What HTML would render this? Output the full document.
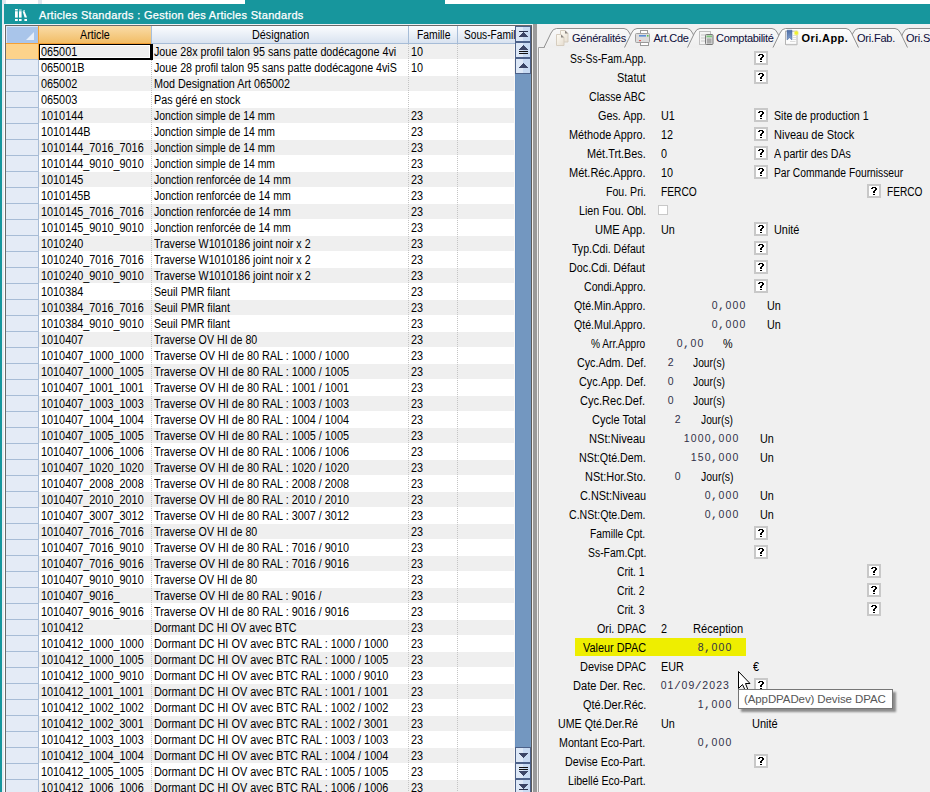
<!DOCTYPE html><html><head><meta charset="utf-8"><style>
*{margin:0;padding:0;box-sizing:border-box}
html,body{width:930px;height:792px;overflow:hidden;background:#fff;position:relative;font-family:"Liberation Sans",sans-serif;font-size:12px;color:#000}
.a{position:absolute}
.t{position:absolute;white-space:nowrap;line-height:13px}
.g{position:absolute;white-space:nowrap;line-height:13px;font-size:12px;transform-origin:0 0}
.r{position:absolute;white-space:nowrap;line-height:13px;font-size:12px;transform-origin:100% 0;text-align:right}
.m{position:absolute;white-space:nowrap;line-height:13px;font-family:"Liberation Mono",monospace;font-size:11.5px;color:#2c2c4c}
.mm{position:absolute;white-space:nowrap;line-height:13px;font-family:"Liberation Sans",sans-serif;font-size:10.5px;color:#303048}
</style></head><body><div class="a" style="left:0;top:0;width:2px;height:792px;background:#17969d"></div>
<div class="a" style="left:2px;top:0;width:2px;height:792px;background:#e6ecf2"></div>
<div class="a" style="left:2px;top:0;width:4px;height:4px;background:#dfe6ee"></div>
<div class="a" style="left:38px;top:0;width:4px;height:4px;background:#dfe6ee"></div>
<div class="a" style="left:245px;top:0;width:200px;height:4px;background:#17969d"></div>
<div class="a" style="left:4px;top:4px;width:926px;height:20px;background:#17969d"></div>
<svg class="a" style="left:0;top:0" width="40" height="26" viewBox="0 0 40 26"><g fill="#fff"><rect x="15" y="9" width="2.8" height="1.5"/><rect x="15" y="11.2" width="2.8" height="6.4"/><rect x="15" y="19" width="2.8" height="2"/><rect x="19" y="9.6" width="2.6" height="0.9"/><rect x="19" y="11.2" width="2.6" height="6.4"/><rect x="19" y="19" width="2.6" height="2"/><rect x="23.3" y="10" width="1.6" height="0.7"/><path d="M22.6,11.2 L24.6,11.2 L27,17.6 L24.6,17.6 Z"/><rect x="24.4" y="19" width="2.6" height="2"/></g></svg>
<div class="t" style="left:39px;top:8px;font-size:11px;line-height:15px;color:#fff;letter-spacing:0.31px;-webkit-text-stroke:0.25px #fff">Articles Standards : Gestion des Articles Standards</div>
<div class="a" style="left:4px;top:24px;width:926px;height:1px;background:#eef1f4"></div>
<div class="a" style="left:5px;top:25px;width:527px;height:767px;background:#fff;border-left:1px solid #696969;border-top:1px solid #696969;border-right:1px solid #5a5a5a"></div>
<div class="a" style="left:6px;top:26px;width:32px;height:17px;background:#a9c5ea;border-top:1px solid #dbe7f7;border-left:1px solid #dbe7f7"></div>
<svg class="a" style="left:23px;top:29px" width="14" height="13" viewBox="0 0 14 13"><path d="M3,11 L11,11 L11,3 Z" fill="#e6eef9"/></svg>
<div class="a" style="left:6px;top:43px;width:33px;height:1px;background:#f5a033"></div>
<div class="a" style="left:38px;top:26px;width:1px;height:17px;background:#f5a033"></div>
<div class="a" style="left:39px;top:26px;width:113px;height:18px;background:linear-gradient(#f9dca8,#f2bd66);border-bottom:1px solid #f5a033"></div>
<div class="g" style="left:80px;top:29px;transform:scaleX(0.894);">Article</div>
<div class="a" style="left:151px;top:26px;width:1px;height:18px;background:#a6bfdc"></div>
<div class="a" style="left:152px;top:26px;width:257px;height:18px;background:linear-gradient(#fbfcfe,#d9e3f0);border-bottom:1px solid #a6bcd7"></div>
<div class="g" style="left:251.6px;top:29px;transform:scaleX(0.903);">Désignation</div>
<div class="a" style="left:408px;top:26px;width:1px;height:17px;background:#a6bcd7"></div>
<div class="a" style="left:409px;top:26px;width:49px;height:18px;background:linear-gradient(#fbfcfe,#d9e3f0);border-bottom:1px solid #a6bcd7"></div>
<div class="g" style="left:416.6px;top:29px;transform:scaleX(0.865);">Famille</div>
<div class="a" style="left:457px;top:26px;width:1px;height:17px;background:#a6bcd7"></div>
<div class="a" style="left:458px;top:26px;width:57px;height:18px;background:linear-gradient(#fbfcfe,#d9e3f0);border-bottom:1px solid #a6bcd7"></div>
<div class="g" style="left:463.6px;top:29px;transform:scaleX(0.847);">Sous-Famil</div>
<div class="a" style="left:6px;top:44px;width:32px;height:16px;background:#fdd38b;border-bottom:1px solid #a7bcd6"></div>
<div class="a" style="left:39px;top:44px;width:476px;height:15px;background:#efefef"></div>
<div class="g" style="left:153.6px;top:46px;transform:scaleX(0.894);">Joue 28x profil talon 95 sans patte dodécagone 4vi</div>
<div class="g" style="left:410.8px;top:46px;transform:scaleX(0.9);">10</div>
<div class="a" style="left:6px;top:60px;width:32px;height:16px;background:#e4ebf6;border-bottom:1px solid #a7bcd6"></div>
<div class="a" style="left:39px;top:60px;width:476px;height:15px;background:#ffffff"></div>
<div class="g" style="left:40.8px;top:62px;transform:scaleX(0.905);">065001B</div>
<div class="g" style="left:153.6px;top:62px;transform:scaleX(0.89);">Joue 28 profil talon 95 sans patte dodécagone 4viS</div>
<div class="g" style="left:410.8px;top:62px;transform:scaleX(0.9);">10</div>
<div class="a" style="left:6px;top:76px;width:32px;height:16px;background:#e4ebf6;border-bottom:1px solid #a7bcd6"></div>
<div class="a" style="left:39px;top:76px;width:476px;height:15px;background:#efefef"></div>
<div class="g" style="left:40.8px;top:78px;transform:scaleX(0.905);">065002</div>
<div class="g" style="left:153.6px;top:78px;transform:scaleX(0.898);">Mod Designation Art 065002</div>
<div class="a" style="left:6px;top:92px;width:32px;height:16px;background:#e4ebf6;border-bottom:1px solid #a7bcd6"></div>
<div class="a" style="left:39px;top:92px;width:476px;height:15px;background:#ffffff"></div>
<div class="g" style="left:40.8px;top:94px;transform:scaleX(0.905);">065003</div>
<div class="g" style="left:153.6px;top:94px;transform:scaleX(0.899);">Pas géré en stock</div>
<div class="a" style="left:6px;top:108px;width:32px;height:16px;background:#e4ebf6;border-bottom:1px solid #a7bcd6"></div>
<div class="a" style="left:39px;top:108px;width:476px;height:15px;background:#efefef"></div>
<div class="g" style="left:40.8px;top:110px;transform:scaleX(0.905);">1010144</div>
<div class="g" style="left:153.6px;top:110px;transform:scaleX(0.868);">Jonction simple de 14 mm</div>
<div class="g" style="left:410.8px;top:110px;transform:scaleX(0.9);">23</div>
<div class="a" style="left:6px;top:124px;width:32px;height:16px;background:#e4ebf6;border-bottom:1px solid #a7bcd6"></div>
<div class="a" style="left:39px;top:124px;width:476px;height:15px;background:#ffffff"></div>
<div class="g" style="left:40.8px;top:126px;transform:scaleX(0.905);">1010144B</div>
<div class="g" style="left:153.6px;top:126px;transform:scaleX(0.868);">Jonction simple de 14 mm</div>
<div class="g" style="left:410.8px;top:126px;transform:scaleX(0.9);">23</div>
<div class="a" style="left:6px;top:140px;width:32px;height:16px;background:#e4ebf6;border-bottom:1px solid #a7bcd6"></div>
<div class="a" style="left:39px;top:140px;width:476px;height:15px;background:#efefef"></div>
<div class="g" style="left:40.8px;top:142px;transform:scaleX(0.905);">1010144_7016_7016</div>
<div class="g" style="left:153.6px;top:142px;transform:scaleX(0.868);">Jonction simple de 14 mm</div>
<div class="g" style="left:410.8px;top:142px;transform:scaleX(0.9);">23</div>
<div class="a" style="left:6px;top:156px;width:32px;height:16px;background:#e4ebf6;border-bottom:1px solid #a7bcd6"></div>
<div class="a" style="left:39px;top:156px;width:476px;height:15px;background:#ffffff"></div>
<div class="g" style="left:40.8px;top:158px;transform:scaleX(0.905);">1010144_9010_9010</div>
<div class="g" style="left:153.6px;top:158px;transform:scaleX(0.868);">Jonction simple de 14 mm</div>
<div class="g" style="left:410.8px;top:158px;transform:scaleX(0.9);">23</div>
<div class="a" style="left:6px;top:172px;width:32px;height:16px;background:#e4ebf6;border-bottom:1px solid #a7bcd6"></div>
<div class="a" style="left:39px;top:172px;width:476px;height:15px;background:#efefef"></div>
<div class="g" style="left:40.8px;top:174px;transform:scaleX(0.905);">1010145</div>
<div class="g" style="left:153.6px;top:174px;transform:scaleX(0.88);">Jonction renforcée de 14 mm</div>
<div class="g" style="left:410.8px;top:174px;transform:scaleX(0.9);">23</div>
<div class="a" style="left:6px;top:188px;width:32px;height:16px;background:#e4ebf6;border-bottom:1px solid #a7bcd6"></div>
<div class="a" style="left:39px;top:188px;width:476px;height:15px;background:#ffffff"></div>
<div class="g" style="left:40.8px;top:190px;transform:scaleX(0.905);">1010145B</div>
<div class="g" style="left:153.6px;top:190px;transform:scaleX(0.88);">Jonction renforcée de 14 mm</div>
<div class="g" style="left:410.8px;top:190px;transform:scaleX(0.9);">23</div>
<div class="a" style="left:6px;top:204px;width:32px;height:16px;background:#e4ebf6;border-bottom:1px solid #a7bcd6"></div>
<div class="a" style="left:39px;top:204px;width:476px;height:15px;background:#efefef"></div>
<div class="g" style="left:40.8px;top:206px;transform:scaleX(0.905);">1010145_7016_7016</div>
<div class="g" style="left:153.6px;top:206px;transform:scaleX(0.88);">Jonction renforcée de 14 mm</div>
<div class="g" style="left:410.8px;top:206px;transform:scaleX(0.9);">23</div>
<div class="a" style="left:6px;top:220px;width:32px;height:16px;background:#e4ebf6;border-bottom:1px solid #a7bcd6"></div>
<div class="a" style="left:39px;top:220px;width:476px;height:15px;background:#ffffff"></div>
<div class="g" style="left:40.8px;top:222px;transform:scaleX(0.905);">1010145_9010_9010</div>
<div class="g" style="left:153.6px;top:222px;transform:scaleX(0.88);">Jonction renforcée de 14 mm</div>
<div class="g" style="left:410.8px;top:222px;transform:scaleX(0.9);">23</div>
<div class="a" style="left:6px;top:236px;width:32px;height:16px;background:#e4ebf6;border-bottom:1px solid #a7bcd6"></div>
<div class="a" style="left:39px;top:236px;width:476px;height:15px;background:#efefef"></div>
<div class="g" style="left:40.8px;top:238px;transform:scaleX(0.905);">1010240</div>
<div class="g" style="left:153.6px;top:238px;transform:scaleX(0.888);">Traverse W1010186 joint noir x 2</div>
<div class="g" style="left:410.8px;top:238px;transform:scaleX(0.9);">23</div>
<div class="a" style="left:6px;top:252px;width:32px;height:16px;background:#e4ebf6;border-bottom:1px solid #a7bcd6"></div>
<div class="a" style="left:39px;top:252px;width:476px;height:15px;background:#ffffff"></div>
<div class="g" style="left:40.8px;top:254px;transform:scaleX(0.905);">1010240_7016_7016</div>
<div class="g" style="left:153.6px;top:254px;transform:scaleX(0.888);">Traverse W1010186 joint noir x 2</div>
<div class="g" style="left:410.8px;top:254px;transform:scaleX(0.9);">23</div>
<div class="a" style="left:6px;top:268px;width:32px;height:16px;background:#e4ebf6;border-bottom:1px solid #a7bcd6"></div>
<div class="a" style="left:39px;top:268px;width:476px;height:15px;background:#efefef"></div>
<div class="g" style="left:40.8px;top:270px;transform:scaleX(0.905);">1010240_9010_9010</div>
<div class="g" style="left:153.6px;top:270px;transform:scaleX(0.888);">Traverse W1010186 joint noir x 2</div>
<div class="g" style="left:410.8px;top:270px;transform:scaleX(0.9);">23</div>
<div class="a" style="left:6px;top:284px;width:32px;height:16px;background:#e4ebf6;border-bottom:1px solid #a7bcd6"></div>
<div class="a" style="left:39px;top:284px;width:476px;height:15px;background:#ffffff"></div>
<div class="g" style="left:40.8px;top:286px;transform:scaleX(0.905);">1010384</div>
<div class="g" style="left:153.6px;top:286px;transform:scaleX(0.889);">Seuil PMR filant</div>
<div class="g" style="left:410.8px;top:286px;transform:scaleX(0.9);">23</div>
<div class="a" style="left:6px;top:300px;width:32px;height:16px;background:#e4ebf6;border-bottom:1px solid #a7bcd6"></div>
<div class="a" style="left:39px;top:300px;width:476px;height:15px;background:#efefef"></div>
<div class="g" style="left:40.8px;top:302px;transform:scaleX(0.905);">1010384_7016_7016</div>
<div class="g" style="left:153.6px;top:302px;transform:scaleX(0.889);">Seuil PMR filant</div>
<div class="g" style="left:410.8px;top:302px;transform:scaleX(0.9);">23</div>
<div class="a" style="left:6px;top:316px;width:32px;height:16px;background:#e4ebf6;border-bottom:1px solid #a7bcd6"></div>
<div class="a" style="left:39px;top:316px;width:476px;height:15px;background:#ffffff"></div>
<div class="g" style="left:40.8px;top:318px;transform:scaleX(0.905);">1010384_9010_9010</div>
<div class="g" style="left:153.6px;top:318px;transform:scaleX(0.889);">Seuil PMR filant</div>
<div class="g" style="left:410.8px;top:318px;transform:scaleX(0.9);">23</div>
<div class="a" style="left:6px;top:332px;width:32px;height:16px;background:#e4ebf6;border-bottom:1px solid #a7bcd6"></div>
<div class="a" style="left:39px;top:332px;width:476px;height:15px;background:#efefef"></div>
<div class="g" style="left:40.8px;top:334px;transform:scaleX(0.905);">1010407</div>
<div class="g" style="left:153.6px;top:334px;transform:scaleX(0.888);">Traverse OV HI de 80</div>
<div class="g" style="left:410.8px;top:334px;transform:scaleX(0.9);">23</div>
<div class="a" style="left:6px;top:348px;width:32px;height:16px;background:#e4ebf6;border-bottom:1px solid #a7bcd6"></div>
<div class="a" style="left:39px;top:348px;width:476px;height:15px;background:#ffffff"></div>
<div class="g" style="left:40.8px;top:350px;transform:scaleX(0.905);">1010407_1000_1000</div>
<div class="g" style="left:153.6px;top:350px;transform:scaleX(0.903);">Traverse OV HI de 80 RAL : 1000 / 1000</div>
<div class="g" style="left:410.8px;top:350px;transform:scaleX(0.9);">23</div>
<div class="a" style="left:6px;top:364px;width:32px;height:16px;background:#e4ebf6;border-bottom:1px solid #a7bcd6"></div>
<div class="a" style="left:39px;top:364px;width:476px;height:15px;background:#efefef"></div>
<div class="g" style="left:40.8px;top:366px;transform:scaleX(0.905);">1010407_1000_1005</div>
<div class="g" style="left:153.6px;top:366px;transform:scaleX(0.903);">Traverse OV HI de 80 RAL : 1000 / 1005</div>
<div class="g" style="left:410.8px;top:366px;transform:scaleX(0.9);">23</div>
<div class="a" style="left:6px;top:380px;width:32px;height:16px;background:#e4ebf6;border-bottom:1px solid #a7bcd6"></div>
<div class="a" style="left:39px;top:380px;width:476px;height:15px;background:#ffffff"></div>
<div class="g" style="left:40.8px;top:382px;transform:scaleX(0.905);">1010407_1001_1001</div>
<div class="g" style="left:153.6px;top:382px;transform:scaleX(0.903);">Traverse OV HI de 80 RAL : 1001 / 1001</div>
<div class="g" style="left:410.8px;top:382px;transform:scaleX(0.9);">23</div>
<div class="a" style="left:6px;top:396px;width:32px;height:16px;background:#e4ebf6;border-bottom:1px solid #a7bcd6"></div>
<div class="a" style="left:39px;top:396px;width:476px;height:15px;background:#efefef"></div>
<div class="g" style="left:40.8px;top:398px;transform:scaleX(0.905);">1010407_1003_1003</div>
<div class="g" style="left:153.6px;top:398px;transform:scaleX(0.903);">Traverse OV HI de 80 RAL : 1003 / 1003</div>
<div class="g" style="left:410.8px;top:398px;transform:scaleX(0.9);">23</div>
<div class="a" style="left:6px;top:412px;width:32px;height:16px;background:#e4ebf6;border-bottom:1px solid #a7bcd6"></div>
<div class="a" style="left:39px;top:412px;width:476px;height:15px;background:#ffffff"></div>
<div class="g" style="left:40.8px;top:414px;transform:scaleX(0.905);">1010407_1004_1004</div>
<div class="g" style="left:153.6px;top:414px;transform:scaleX(0.903);">Traverse OV HI de 80 RAL : 1004 / 1004</div>
<div class="g" style="left:410.8px;top:414px;transform:scaleX(0.9);">23</div>
<div class="a" style="left:6px;top:428px;width:32px;height:16px;background:#e4ebf6;border-bottom:1px solid #a7bcd6"></div>
<div class="a" style="left:39px;top:428px;width:476px;height:15px;background:#efefef"></div>
<div class="g" style="left:40.8px;top:430px;transform:scaleX(0.905);">1010407_1005_1005</div>
<div class="g" style="left:153.6px;top:430px;transform:scaleX(0.903);">Traverse OV HI de 80 RAL : 1005 / 1005</div>
<div class="g" style="left:410.8px;top:430px;transform:scaleX(0.9);">23</div>
<div class="a" style="left:6px;top:444px;width:32px;height:16px;background:#e4ebf6;border-bottom:1px solid #a7bcd6"></div>
<div class="a" style="left:39px;top:444px;width:476px;height:15px;background:#ffffff"></div>
<div class="g" style="left:40.8px;top:446px;transform:scaleX(0.905);">1010407_1006_1006</div>
<div class="g" style="left:153.6px;top:446px;transform:scaleX(0.903);">Traverse OV HI de 80 RAL : 1006 / 1006</div>
<div class="g" style="left:410.8px;top:446px;transform:scaleX(0.9);">23</div>
<div class="a" style="left:6px;top:460px;width:32px;height:16px;background:#e4ebf6;border-bottom:1px solid #a7bcd6"></div>
<div class="a" style="left:39px;top:460px;width:476px;height:15px;background:#efefef"></div>
<div class="g" style="left:40.8px;top:462px;transform:scaleX(0.905);">1010407_1020_1020</div>
<div class="g" style="left:153.6px;top:462px;transform:scaleX(0.903);">Traverse OV HI de 80 RAL : 1020 / 1020</div>
<div class="g" style="left:410.8px;top:462px;transform:scaleX(0.9);">23</div>
<div class="a" style="left:6px;top:476px;width:32px;height:16px;background:#e4ebf6;border-bottom:1px solid #a7bcd6"></div>
<div class="a" style="left:39px;top:476px;width:476px;height:15px;background:#ffffff"></div>
<div class="g" style="left:40.8px;top:478px;transform:scaleX(0.905);">1010407_2008_2008</div>
<div class="g" style="left:153.6px;top:478px;transform:scaleX(0.903);">Traverse OV HI de 80 RAL : 2008 / 2008</div>
<div class="g" style="left:410.8px;top:478px;transform:scaleX(0.9);">23</div>
<div class="a" style="left:6px;top:492px;width:32px;height:16px;background:#e4ebf6;border-bottom:1px solid #a7bcd6"></div>
<div class="a" style="left:39px;top:492px;width:476px;height:15px;background:#efefef"></div>
<div class="g" style="left:40.8px;top:494px;transform:scaleX(0.905);">1010407_2010_2010</div>
<div class="g" style="left:153.6px;top:494px;transform:scaleX(0.903);">Traverse OV HI de 80 RAL : 2010 / 2010</div>
<div class="g" style="left:410.8px;top:494px;transform:scaleX(0.9);">23</div>
<div class="a" style="left:6px;top:508px;width:32px;height:16px;background:#e4ebf6;border-bottom:1px solid #a7bcd6"></div>
<div class="a" style="left:39px;top:508px;width:476px;height:15px;background:#ffffff"></div>
<div class="g" style="left:40.8px;top:510px;transform:scaleX(0.905);">1010407_3007_3012</div>
<div class="g" style="left:153.6px;top:510px;transform:scaleX(0.903);">Traverse OV HI de 80 RAL : 3007 / 3012</div>
<div class="g" style="left:410.8px;top:510px;transform:scaleX(0.9);">23</div>
<div class="a" style="left:6px;top:524px;width:32px;height:16px;background:#e4ebf6;border-bottom:1px solid #a7bcd6"></div>
<div class="a" style="left:39px;top:524px;width:476px;height:15px;background:#efefef"></div>
<div class="g" style="left:40.8px;top:526px;transform:scaleX(0.905);">1010407_7016_7016</div>
<div class="g" style="left:153.6px;top:526px;transform:scaleX(0.888);">Traverse OV HI de 80</div>
<div class="g" style="left:410.8px;top:526px;transform:scaleX(0.9);">23</div>
<div class="a" style="left:6px;top:540px;width:32px;height:16px;background:#e4ebf6;border-bottom:1px solid #a7bcd6"></div>
<div class="a" style="left:39px;top:540px;width:476px;height:15px;background:#ffffff"></div>
<div class="g" style="left:40.8px;top:542px;transform:scaleX(0.905);">1010407_7016_9010</div>
<div class="g" style="left:153.6px;top:542px;transform:scaleX(0.903);">Traverse OV HI de 80 RAL : 7016 / 9010</div>
<div class="g" style="left:410.8px;top:542px;transform:scaleX(0.9);">23</div>
<div class="a" style="left:6px;top:556px;width:32px;height:16px;background:#e4ebf6;border-bottom:1px solid #a7bcd6"></div>
<div class="a" style="left:39px;top:556px;width:476px;height:15px;background:#efefef"></div>
<div class="g" style="left:40.8px;top:558px;transform:scaleX(0.905);">1010407_7016_9016</div>
<div class="g" style="left:153.6px;top:558px;transform:scaleX(0.903);">Traverse OV HI de 80 RAL : 7016 / 9016</div>
<div class="g" style="left:410.8px;top:558px;transform:scaleX(0.9);">23</div>
<div class="a" style="left:6px;top:572px;width:32px;height:16px;background:#e4ebf6;border-bottom:1px solid #a7bcd6"></div>
<div class="a" style="left:39px;top:572px;width:476px;height:15px;background:#ffffff"></div>
<div class="g" style="left:40.8px;top:574px;transform:scaleX(0.905);">1010407_9010_9010</div>
<div class="g" style="left:153.6px;top:574px;transform:scaleX(0.888);">Traverse OV HI de 80</div>
<div class="g" style="left:410.8px;top:574px;transform:scaleX(0.9);">23</div>
<div class="a" style="left:6px;top:588px;width:32px;height:16px;background:#e4ebf6;border-bottom:1px solid #a7bcd6"></div>
<div class="a" style="left:39px;top:588px;width:476px;height:15px;background:#efefef"></div>
<div class="g" style="left:40.8px;top:590px;transform:scaleX(0.905);">1010407_9016_</div>
<div class="g" style="left:153.6px;top:590px;transform:scaleX(0.901);">Traverse OV HI de 80 RAL : 9016 /</div>
<div class="g" style="left:410.8px;top:590px;transform:scaleX(0.9);">23</div>
<div class="a" style="left:6px;top:604px;width:32px;height:16px;background:#e4ebf6;border-bottom:1px solid #a7bcd6"></div>
<div class="a" style="left:39px;top:604px;width:476px;height:15px;background:#ffffff"></div>
<div class="g" style="left:40.8px;top:606px;transform:scaleX(0.905);">1010407_9016_9016</div>
<div class="g" style="left:153.6px;top:606px;transform:scaleX(0.903);">Traverse OV HI de 80 RAL : 9016 / 9016</div>
<div class="g" style="left:410.8px;top:606px;transform:scaleX(0.9);">23</div>
<div class="a" style="left:6px;top:620px;width:32px;height:16px;background:#e4ebf6;border-bottom:1px solid #a7bcd6"></div>
<div class="a" style="left:39px;top:620px;width:476px;height:15px;background:#efefef"></div>
<div class="g" style="left:40.8px;top:622px;transform:scaleX(0.905);">1010412</div>
<div class="g" style="left:153.6px;top:622px;transform:scaleX(0.898);">Dormant DC HI OV avec BTC</div>
<div class="g" style="left:410.8px;top:622px;transform:scaleX(0.9);">23</div>
<div class="a" style="left:6px;top:636px;width:32px;height:16px;background:#e4ebf6;border-bottom:1px solid #a7bcd6"></div>
<div class="a" style="left:39px;top:636px;width:476px;height:15px;background:#ffffff"></div>
<div class="g" style="left:40.8px;top:638px;transform:scaleX(0.905);">1010412_1000_1000</div>
<div class="g" style="left:153.6px;top:638px;transform:scaleX(0.907);">Dormant DC HI OV avec BTC RAL : 1000 / 1000</div>
<div class="g" style="left:410.8px;top:638px;transform:scaleX(0.9);">23</div>
<div class="a" style="left:6px;top:652px;width:32px;height:16px;background:#e4ebf6;border-bottom:1px solid #a7bcd6"></div>
<div class="a" style="left:39px;top:652px;width:476px;height:15px;background:#efefef"></div>
<div class="g" style="left:40.8px;top:654px;transform:scaleX(0.905);">1010412_1000_1005</div>
<div class="g" style="left:153.6px;top:654px;transform:scaleX(0.907);">Dormant DC HI OV avec BTC RAL : 1000 / 1005</div>
<div class="g" style="left:410.8px;top:654px;transform:scaleX(0.9);">23</div>
<div class="a" style="left:6px;top:668px;width:32px;height:16px;background:#e4ebf6;border-bottom:1px solid #a7bcd6"></div>
<div class="a" style="left:39px;top:668px;width:476px;height:15px;background:#ffffff"></div>
<div class="g" style="left:40.8px;top:670px;transform:scaleX(0.905);">1010412_1000_9010</div>
<div class="g" style="left:153.6px;top:670px;transform:scaleX(0.907);">Dormant DC HI OV avec BTC RAL : 1000 / 9010</div>
<div class="g" style="left:410.8px;top:670px;transform:scaleX(0.9);">23</div>
<div class="a" style="left:6px;top:684px;width:32px;height:16px;background:#e4ebf6;border-bottom:1px solid #a7bcd6"></div>
<div class="a" style="left:39px;top:684px;width:476px;height:15px;background:#efefef"></div>
<div class="g" style="left:40.8px;top:686px;transform:scaleX(0.905);">1010412_1001_1001</div>
<div class="g" style="left:153.6px;top:686px;transform:scaleX(0.907);">Dormant DC HI OV avec BTC RAL : 1001 / 1001</div>
<div class="g" style="left:410.8px;top:686px;transform:scaleX(0.9);">23</div>
<div class="a" style="left:6px;top:700px;width:32px;height:16px;background:#e4ebf6;border-bottom:1px solid #a7bcd6"></div>
<div class="a" style="left:39px;top:700px;width:476px;height:15px;background:#ffffff"></div>
<div class="g" style="left:40.8px;top:702px;transform:scaleX(0.905);">1010412_1002_1002</div>
<div class="g" style="left:153.6px;top:702px;transform:scaleX(0.907);">Dormant DC HI OV avec BTC RAL : 1002 / 1002</div>
<div class="g" style="left:410.8px;top:702px;transform:scaleX(0.9);">23</div>
<div class="a" style="left:6px;top:716px;width:32px;height:16px;background:#e4ebf6;border-bottom:1px solid #a7bcd6"></div>
<div class="a" style="left:39px;top:716px;width:476px;height:15px;background:#efefef"></div>
<div class="g" style="left:40.8px;top:718px;transform:scaleX(0.905);">1010412_1002_3001</div>
<div class="g" style="left:153.6px;top:718px;transform:scaleX(0.907);">Dormant DC HI OV avec BTC RAL : 1002 / 3001</div>
<div class="g" style="left:410.8px;top:718px;transform:scaleX(0.9);">23</div>
<div class="a" style="left:6px;top:732px;width:32px;height:16px;background:#e4ebf6;border-bottom:1px solid #a7bcd6"></div>
<div class="a" style="left:39px;top:732px;width:476px;height:15px;background:#ffffff"></div>
<div class="g" style="left:40.8px;top:734px;transform:scaleX(0.905);">1010412_1003_1003</div>
<div class="g" style="left:153.6px;top:734px;transform:scaleX(0.907);">Dormant DC HI OV avec BTC RAL : 1003 / 1003</div>
<div class="g" style="left:410.8px;top:734px;transform:scaleX(0.9);">23</div>
<div class="a" style="left:6px;top:748px;width:32px;height:16px;background:#e4ebf6;border-bottom:1px solid #a7bcd6"></div>
<div class="a" style="left:39px;top:748px;width:476px;height:15px;background:#efefef"></div>
<div class="g" style="left:40.8px;top:750px;transform:scaleX(0.905);">1010412_1004_1004</div>
<div class="g" style="left:153.6px;top:750px;transform:scaleX(0.907);">Dormant DC HI OV avec BTC RAL : 1004 / 1004</div>
<div class="g" style="left:410.8px;top:750px;transform:scaleX(0.9);">23</div>
<div class="a" style="left:6px;top:764px;width:32px;height:16px;background:#e4ebf6;border-bottom:1px solid #a7bcd6"></div>
<div class="a" style="left:39px;top:764px;width:476px;height:15px;background:#ffffff"></div>
<div class="g" style="left:40.8px;top:766px;transform:scaleX(0.905);">1010412_1005_1005</div>
<div class="g" style="left:153.6px;top:766px;transform:scaleX(0.907);">Dormant DC HI OV avec BTC RAL : 1005 / 1005</div>
<div class="g" style="left:410.8px;top:766px;transform:scaleX(0.9);">23</div>
<div class="a" style="left:6px;top:780px;width:32px;height:16px;background:#e4ebf6;border-bottom:1px solid #a7bcd6"></div>
<div class="a" style="left:39px;top:780px;width:476px;height:15px;background:#efefef"></div>
<div class="g" style="left:40.8px;top:782px;transform:scaleX(0.905);">1010412_1006_1006</div>
<div class="g" style="left:153.6px;top:782px;transform:scaleX(0.907);">Dormant DC HI OV avec BTC RAL : 1006 / 1006</div>
<div class="g" style="left:410.8px;top:782px;transform:scaleX(0.9);">23</div>
<div class="a" style="left:38px;top:60px;width:1px;height:732px;background:#a7bcd6"></div>
<div class="a" style="left:38px;top:44px;width:1px;height:16px;background:#f5a033"></div>
<div class="a" style="left:151px;top:44px;width:1px;height:748px;background:repeating-linear-gradient(#c4c4c4 0 1px,transparent 1px 2px)"></div>
<div class="a" style="left:408px;top:44px;width:1px;height:748px;background:repeating-linear-gradient(#c4c4c4 0 1px,transparent 1px 2px)"></div>
<div class="a" style="left:457px;top:44px;width:1px;height:748px;background:repeating-linear-gradient(#c4c4c4 0 1px,transparent 1px 2px)"></div>
<div class="a" style="left:39px;top:44px;width:114px;height:16px;border:1px solid #000;border-right:3px solid #000;border-bottom:2px solid #000;"></div>
<div class="a" style="left:40px;top:45px;width:110px;height:13px;border:1px solid #fff;background:#efefef"></div>
<div class="g" style="left:40.8px;top:46px;transform:scaleX(0.905);">065001</div>
<svg class="a" style="left:515px;top:26px" width="16" height="766" viewBox="515 26 16 766" shape-rendering="crispEdges"><rect x="515" y="26" width="16" height="766" fill="#7397c0"/><rect x="515" y="26" width="1" height="766" fill="#6a90bf"/><rect x="515" y="26" width="16" height="16" fill="#4c6189"/><rect x="516" y="27" width="7" height="14" fill="#dde8f7"/><rect x="523" y="27" width="7" height="14" fill="#c7daf2"/><rect x="515" y="42" width="16" height="16" fill="#4c6189"/><rect x="516" y="43" width="7" height="14" fill="#dde8f7"/><rect x="523" y="43" width="7" height="14" fill="#c7daf2"/><rect x="515" y="58" width="16" height="16" fill="#4c6189"/><rect x="516" y="59" width="7" height="14" fill="#dde8f7"/><rect x="523" y="59" width="7" height="14" fill="#c7daf2"/><rect x="515" y="73" width="16" height="1" fill="#4c6189"/><rect x="519" y="31" width="9" height="1" fill="#2c3550"/><rect x="523" y="32" width="1" height="1" fill="#3b4566"/><rect x="522" y="33" width="3" height="1" fill="#3b4566"/><rect x="521" y="34" width="5" height="1" fill="#3b4566"/><rect x="520" y="35" width="7" height="1" fill="#3b4566"/><rect x="519" y="36" width="9" height="1" fill="#3b4566"/><rect x="523" y="45" width="1" height="1" fill="#3b4566"/><rect x="522" y="46" width="3" height="1" fill="#3b4566"/><rect x="521" y="47" width="5" height="1" fill="#3b4566"/><rect x="520" y="48" width="7" height="1" fill="#3b4566"/><rect x="519" y="49" width="9" height="1" fill="#3b4566"/><rect x="519" y="51" width="9" height="1" fill="#111"/><rect x="519" y="53" width="9" height="1" fill="#111"/><rect x="523" y="63" width="1" height="1" fill="#3b4566"/><rect x="522" y="64" width="3" height="1" fill="#3b4566"/><rect x="521" y="65" width="5" height="1" fill="#3b4566"/><rect x="520" y="66" width="7" height="1" fill="#3b4566"/><rect x="519" y="67" width="9" height="1" fill="#3b4566"/><rect x="515" y="747" width="16" height="16" fill="#4c6189"/><rect x="516" y="748" width="7" height="14" fill="#dde8f7"/><rect x="523" y="748" width="7" height="14" fill="#c7daf2"/><rect x="515" y="763" width="16" height="16" fill="#4c6189"/><rect x="516" y="764" width="7" height="14" fill="#dde8f7"/><rect x="523" y="764" width="7" height="14" fill="#c7daf2"/><rect x="515" y="779" width="16" height="16" fill="#4c6189"/><rect x="516" y="780" width="7" height="14" fill="#dde8f7"/><rect x="523" y="780" width="7" height="14" fill="#c7daf2"/><rect x="515" y="747" width="16" height="1" fill="#4c6189"/><rect x="519" y="753" width="9" height="1" fill="#3b4566"/><rect x="520" y="754" width="7" height="1" fill="#3b4566"/><rect x="521" y="755" width="5" height="1" fill="#3b4566"/><rect x="522" y="756" width="3" height="1" fill="#3b4566"/><rect x="523" y="757" width="1" height="1" fill="#3b4566"/><rect x="519" y="767" width="9" height="1" fill="#111"/><rect x="519" y="769" width="9" height="1" fill="#111"/><rect x="519" y="771" width="9" height="1" fill="#3b4566"/><rect x="520" y="772" width="7" height="1" fill="#3b4566"/><rect x="521" y="773" width="5" height="1" fill="#3b4566"/><rect x="522" y="774" width="3" height="1" fill="#3b4566"/><rect x="523" y="775" width="1" height="1" fill="#3b4566"/><rect x="519" y="784" width="9" height="1" fill="#3b4566"/><rect x="520" y="785" width="7" height="1" fill="#3b4566"/><rect x="521" y="786" width="5" height="1" fill="#3b4566"/><rect x="522" y="787" width="3" height="1" fill="#3b4566"/><rect x="523" y="788" width="1" height="1" fill="#3b4566"/><rect x="519" y="789" width="9" height="1" fill="#2c3550"/></svg>
<div class="a" style="left:514px;top:44px;width:1px;height:748px;background:#f8f7f5"></div>
<div class="a" style="left:532px;top:25px;width:1px;height:767px;background:#f0f0f0"></div>
<div class="a" style="left:533px;top:24px;width:4px;height:768px;background:#9a9a9a"></div>
<div class="a" style="left:537px;top:25px;width:393px;height:767px;background:#f0f0f0"></div>
<div class="a" style="left:538px;top:48px;width:1px;height:744px;background:#a0a0a0"></div>
<div class="a" style="left:539px;top:48px;width:1px;height:744px;background:#f9f9f9"></div>
<svg class="a" style="left:0;top:0" width="930" height="48" viewBox="0 0 930 48"><defs><linearGradient id="tg" x1="0" y1="0" x2="0" y2="1"><stop offset="0" stop-color="#f9f9f9"/><stop offset="1" stop-color="#eeeeee"/></linearGradient><linearGradient id="ta" x1="0" y1="0" x2="0" y2="1"><stop offset="0" stop-color="#ffffff"/><stop offset="1" stop-color="#f0f0f0"/></linearGradient></defs><path d="M538.5,60 L538.5,47.5 L545,47.5" fill="none" stroke="#a0a0a0" stroke-width="1"/><path d="M896,47.5 L903,33 Q905,28.5 908.5,28.5 L950,28.5 Q953.5,28.5 955.5,33 L962.5,47.5" fill="url(#tg)" stroke="none"/><path d="M901,38 L903,33 Q905,28.5 908.5,28.5 L950,28.5 Q953.5,28.5 955.5,33 L962.5,47.5" fill="none" stroke="#8f8f8f" stroke-width="1"/><path d="M846,47.5 L853,33 Q855,28.5 858.5,28.5 L895,28.5 Q898.5,28.5 900.5,33 L907.5,47.5" fill="url(#tg)" stroke="none"/><path d="M851,38 L853,33 Q855,28.5 858.5,28.5 L895,28.5 Q898.5,28.5 900.5,33 L907.5,47.5" fill="none" stroke="#8f8f8f" stroke-width="1"/><path d="M544,47.5 L551,33 Q553,28.5 556.5,28.5 L624,28.5 Q627.5,28.5 629.5,33 L636.5,47.5" fill="url(#tg)" stroke="none"/><path d="M544,47.5 L551,33 Q553,28.5 556.5,28.5 L624,28.5 Q627.5,28.5 629.5,33 L632,38" fill="none" stroke="#8f8f8f" stroke-width="1"/><path d="M624.5,47.5 L631.5,33 Q633.5,28.5 637.0,28.5 L687,28.5 Q690.5,28.5 692.5,33 L699.5,47.5" fill="url(#tg)" stroke="none"/><path d="M624.5,47.5 L631.5,33 Q633.5,28.5 637.0,28.5 L687,28.5 Q690.5,28.5 692.5,33 L695,38" fill="none" stroke="#8f8f8f" stroke-width="1"/><path d="M687.5,47.5 L694.5,33 Q696.5,28.5 700.0,28.5 L772,28.5 Q775.5,28.5 777.5,33 L784.5,47.5" fill="url(#tg)" stroke="none"/><path d="M687.5,47.5 L694.5,33 Q696.5,28.5 700.0,28.5 L772,28.5 Q775.5,28.5 777.5,33 L780,38" fill="none" stroke="#8f8f8f" stroke-width="1"/><path d="M773,47.5 L780,33 Q782,28.5 785.5,28.5 L846,28.5 Q849.5,28.5 851.5,33 L858.5,47.5" fill="url(#ta)" stroke="#8f8f8f" stroke-width="1"/><defs><linearGradient id="pg" x1="0" y1="0" x2="1" y2="1"><stop offset="0" stop-color="#fffdf5"/><stop offset="1" stop-color="#e6ddd0"/></linearGradient></defs><g><path d="M560.5,30.5 h4.5 l3,3 v8.5 h-7.5z" fill="url(#pg)" stroke="#d6cdbf" stroke-width="1"/><path d="M565,30.5 v3 h3 z" fill="#8a8580"/><path d="M556.5,34.5 h4.5 l3,3 v8 h-7.5z" fill="url(#pg)" stroke="#d6cdbf" stroke-width="1"/><path d="M561,34.5 v3 h3 z" fill="#8a8580"/></g><g><rect x="640.5" y="30.5" width="7" height="3" fill="#fff" stroke="#9a9a9a"/><rect x="635.5" y="33.5" width="14" height="9" rx="1" fill="#dcdcdc" stroke="#a0a0a0"/><rect x="639" y="35" width="7" height="1.6" fill="#5b8fd6"/><rect x="647" y="35" width="1.5" height="1.6" fill="#55c055"/><rect x="639" y="40" width="2" height="1.2" fill="#e06060"/><rect x="640.5" y="42.5" width="8" height="3" fill="#fff" stroke="#9a9a9a"/></g><g><rect x="699.5" y="31.5" width="11" height="13" fill="#f4f4f4" stroke="#c0c0c0"/><path d="M701,35h7M701,38h4M701,41h4" stroke="#c8c8c8"/><rect x="705.5" y="34.5" width="7.5" height="10" rx="1" fill="#e0e0e0" stroke="#777"/><rect x="706.5" y="35.5" width="5.5" height="1.8" fill="#7cc47c"/><rect x="707" y="38.5" width="4.5" height="5" fill="#aaa"/></g><defs><linearGradient id="bm" x1="0" y1="0" x2="0" y2="1"><stop offset="0" stop-color="#4e6ea6"/><stop offset="1" stop-color="#86a3cf"/></linearGradient></defs><g><rect x="785.5" y="31.2" width="11.5" height="13.2" fill="#fdfdfd" stroke="#b4b4b4"/><path d="M787,30.2 h5 v9.8 l-2.5,-2.2 l-2.5,2.2z" fill="url(#bm)" stroke="#4a6aa0" stroke-width="0.5"/><path d="M793,35.5h3M793,37.5h3M793,39.5h3M790,41.5h5.5" stroke="#d4d4d4" stroke-width="0.8"/><rect x="786" y="44.8" width="11" height="1" fill="#dedede"/><circle cx="796.3" cy="33" r="2.6" fill="#f4f47a" opacity="0.6"/><circle cx="796.3" cy="33" r="1.8" fill="#f0f030"/></g></svg>
<div class="t" style="left:572px;top:32px;font-size:11px;letter-spacing:-0.2px;color:#0b0b3a;">Généralités</div>
<div class="t" style="left:653.5px;top:32px;font-size:11px;letter-spacing:-0.33px;color:#0b0b3a;">Art.Cde</div>
<div class="t" style="left:716px;top:32px;font-size:11px;letter-spacing:-0.3px;color:#0b0b3a;">Comptabilité</div>
<div class="t" style="left:801.5px;top:32px;font-size:11px;letter-spacing:0.4px;font-weight:bold;color:#000 !important;">Ori.App.</div>
<div class="t" style="left:857px;top:32px;font-size:11px;letter-spacing:-0.2px;color:#0b0b3a;">Ori.Fab.</div>
<div class="t" style="left:906px;top:32px;font-size:11px;letter-spacing:-0.2px;color:#0b0b3a;">Ori.S</div>
<div class="a" style="left:575px;top:638px;width:171px;height:18px;background:#eeee00"></div>
<div class="g" style="left:569.54px;top:53px;transform:scaleX(0.864);">Ss-Ss-Fam.App.</div>
<div class="g" style="left:616.69px;top:72px;transform:scaleX(0.9133);">Statut</div>
<div class="g" style="left:589.42px;top:91px;transform:scaleX(0.8823);">Classe ABC</div>
<div class="g" style="left:597.8px;top:110px;transform:scaleX(0.902);">Ges. App.</div>
<div class="g" style="left:568.8px;top:129px;transform:scaleX(0.9036);">Méthode Appro.</div>
<div class="g" style="left:586.69px;top:148px;transform:scaleX(0.9063);">Mét.Trt.Bes.</div>
<div class="g" style="left:569.48px;top:167px;transform:scaleX(0.9173);">Mét.Réc.Appro.</div>
<div class="g" style="left:605.92px;top:186px;transform:scaleX(0.8814);">Fou. Pri.</div>
<div class="g" style="left:578.61px;top:205px;transform:scaleX(0.8932);">Lien Fou. Obl.</div>
<div class="g" style="left:595.37px;top:224px;transform:scaleX(0.9308);">UME App.</div>
<div class="g" style="left:572.1px;top:243px;transform:scaleX(0.8783);">Typ.Cdi. Défaut</div>
<div class="g" style="left:568.8px;top:262px;transform:scaleX(0.8964);">Doc.Cdi. Défaut</div>
<div class="g" style="left:583.92px;top:281px;transform:scaleX(0.8809);">Condi.Appro.</div>
<div class="g" style="left:574.0px;top:300px;transform:scaleX(0.8838);">Qté.Min.Appro.</div>
<div class="g" style="left:574.0px;top:319px;transform:scaleX(0.8838);">Qté.Mul.Appro.</div>
<div class="g" style="left:590.8px;top:338px;transform:scaleX(0.8469);">% Arr.Appro</div>
<div class="g" style="left:576.71px;top:357px;transform:scaleX(0.8947);">Cyc.Adm. Def.</div>
<div class="g" style="left:578.59px;top:376px;transform:scaleX(0.9056);">Cyc.App. Def.</div>
<div class="g" style="left:580.28px;top:395px;transform:scaleX(0.9203);">Cyc.Rec.Def.</div>
<div class="g" style="left:591.78px;top:414px;transform:scaleX(0.9175);">Cycle Total</div>
<div class="g" style="left:589.37px;top:433px;transform:scaleX(0.9271);">NSt:Niveau</div>
<div class="g" style="left:578.61px;top:452px;transform:scaleX(0.8932);">NSt:Qté.Dem.</div>
<div class="g" style="left:584.59px;top:471px;transform:scaleX(0.9108);">NSt:Hor.Sto.</div>
<div class="g" style="left:579.59px;top:490px;transform:scaleX(0.9085);">C.NSt:Niveau</div>
<div class="g" style="left:568.82px;top:509px;transform:scaleX(0.8824);">C.NSt:Qte.Dem.</div>
<div class="g" style="left:590.34px;top:528px;transform:scaleX(0.8629);">Famille Cpt.</div>
<div class="g" style="left:587.53px;top:547px;transform:scaleX(0.8662);">Ss-Fam.Cpt.</div>
<div class="g" style="left:617.44px;top:566px;transform:scaleX(0.8613);">Crit. 1</div>
<div class="g" style="left:617.44px;top:585px;transform:scaleX(0.8613);">Crit. 2</div>
<div class="g" style="left:617.44px;top:604px;transform:scaleX(0.8613);">Crit. 3</div>
<div class="g" style="left:597.3px;top:623px;transform:scaleX(0.8944);">Ori. DPAC</div>
<div class="g" style="left:583.0px;top:642px;transform:scaleX(0.9072);">Valeur DPAC</div>
<div class="g" style="left:579.89px;top:661px;transform:scaleX(0.9127);">Devise DPAC</div>
<div class="g" style="left:572.58px;top:680px;transform:scaleX(0.9221);">Date Der. Rec.</div>
<div class="g" style="left:582.5px;top:699px;transform:scaleX(0.9118);">Qté.Der.Réc.</div>
<div class="g" style="left:557.91px;top:718px;transform:scaleX(0.8888);">UME Qté.Der.Ré</div>
<div class="g" style="left:559.01px;top:737px;transform:scaleX(0.8905);">Montant Eco-Part.</div>
<div class="g" style="left:564.91px;top:756px;transform:scaleX(0.8943);">Devise Eco-Part.</div>
<div class="g" style="left:567.82px;top:775px;transform:scaleX(0.8814);">Libellé Eco-Part.</div>
<div class="a" style="left:754px;top:51px;width:14px;height:14px;background:#fff;border:2px solid #c8c8c8"></div>
<svg class="a" style="left:758px;top:54px" width="6" height="8" viewBox="0 0 6 8" shape-rendering="crispEdges" fill="#000"><rect x="1" y="0" width="4" height="1"/><rect x="0" y="1" width="2" height="1"/><rect x="4" y="1" width="2" height="1"/><rect x="4" y="2" width="2" height="1"/><rect x="3" y="3" width="2" height="1"/><rect x="2" y="4" width="2" height="1"/><rect x="2" y="5" width="2" height="1"/><rect x="2" y="7" width="2" height="1"/></svg>
<div class="a" style="left:754px;top:70px;width:14px;height:14px;background:#fff;border:2px solid #c8c8c8"></div>
<svg class="a" style="left:758px;top:73px" width="6" height="8" viewBox="0 0 6 8" shape-rendering="crispEdges" fill="#000"><rect x="1" y="0" width="4" height="1"/><rect x="0" y="1" width="2" height="1"/><rect x="4" y="1" width="2" height="1"/><rect x="4" y="2" width="2" height="1"/><rect x="3" y="3" width="2" height="1"/><rect x="2" y="4" width="2" height="1"/><rect x="2" y="5" width="2" height="1"/><rect x="2" y="7" width="2" height="1"/></svg>
<div class="a" style="left:754px;top:108px;width:14px;height:14px;background:#fff;border:2px solid #c8c8c8"></div>
<svg class="a" style="left:758px;top:111px" width="6" height="8" viewBox="0 0 6 8" shape-rendering="crispEdges" fill="#000"><rect x="1" y="0" width="4" height="1"/><rect x="0" y="1" width="2" height="1"/><rect x="4" y="1" width="2" height="1"/><rect x="4" y="2" width="2" height="1"/><rect x="3" y="3" width="2" height="1"/><rect x="2" y="4" width="2" height="1"/><rect x="2" y="5" width="2" height="1"/><rect x="2" y="7" width="2" height="1"/></svg>
<div class="a" style="left:754px;top:127px;width:14px;height:14px;background:#fff;border:2px solid #c8c8c8"></div>
<svg class="a" style="left:758px;top:130px" width="6" height="8" viewBox="0 0 6 8" shape-rendering="crispEdges" fill="#000"><rect x="1" y="0" width="4" height="1"/><rect x="0" y="1" width="2" height="1"/><rect x="4" y="1" width="2" height="1"/><rect x="4" y="2" width="2" height="1"/><rect x="3" y="3" width="2" height="1"/><rect x="2" y="4" width="2" height="1"/><rect x="2" y="5" width="2" height="1"/><rect x="2" y="7" width="2" height="1"/></svg>
<div class="a" style="left:754px;top:146px;width:14px;height:14px;background:#fff;border:2px solid #c8c8c8"></div>
<svg class="a" style="left:758px;top:149px" width="6" height="8" viewBox="0 0 6 8" shape-rendering="crispEdges" fill="#000"><rect x="1" y="0" width="4" height="1"/><rect x="0" y="1" width="2" height="1"/><rect x="4" y="1" width="2" height="1"/><rect x="4" y="2" width="2" height="1"/><rect x="3" y="3" width="2" height="1"/><rect x="2" y="4" width="2" height="1"/><rect x="2" y="5" width="2" height="1"/><rect x="2" y="7" width="2" height="1"/></svg>
<div class="a" style="left:754px;top:165px;width:14px;height:14px;background:#fff;border:2px solid #c8c8c8"></div>
<svg class="a" style="left:758px;top:168px" width="6" height="8" viewBox="0 0 6 8" shape-rendering="crispEdges" fill="#000"><rect x="1" y="0" width="4" height="1"/><rect x="0" y="1" width="2" height="1"/><rect x="4" y="1" width="2" height="1"/><rect x="4" y="2" width="2" height="1"/><rect x="3" y="3" width="2" height="1"/><rect x="2" y="4" width="2" height="1"/><rect x="2" y="5" width="2" height="1"/><rect x="2" y="7" width="2" height="1"/></svg>
<div class="a" style="left:754px;top:222px;width:14px;height:14px;background:#fff;border:2px solid #c8c8c8"></div>
<svg class="a" style="left:758px;top:225px" width="6" height="8" viewBox="0 0 6 8" shape-rendering="crispEdges" fill="#000"><rect x="1" y="0" width="4" height="1"/><rect x="0" y="1" width="2" height="1"/><rect x="4" y="1" width="2" height="1"/><rect x="4" y="2" width="2" height="1"/><rect x="3" y="3" width="2" height="1"/><rect x="2" y="4" width="2" height="1"/><rect x="2" y="5" width="2" height="1"/><rect x="2" y="7" width="2" height="1"/></svg>
<div class="a" style="left:754px;top:241px;width:14px;height:14px;background:#fff;border:2px solid #c8c8c8"></div>
<svg class="a" style="left:758px;top:244px" width="6" height="8" viewBox="0 0 6 8" shape-rendering="crispEdges" fill="#000"><rect x="1" y="0" width="4" height="1"/><rect x="0" y="1" width="2" height="1"/><rect x="4" y="1" width="2" height="1"/><rect x="4" y="2" width="2" height="1"/><rect x="3" y="3" width="2" height="1"/><rect x="2" y="4" width="2" height="1"/><rect x="2" y="5" width="2" height="1"/><rect x="2" y="7" width="2" height="1"/></svg>
<div class="a" style="left:754px;top:260px;width:14px;height:14px;background:#fff;border:2px solid #c8c8c8"></div>
<svg class="a" style="left:758px;top:263px" width="6" height="8" viewBox="0 0 6 8" shape-rendering="crispEdges" fill="#000"><rect x="1" y="0" width="4" height="1"/><rect x="0" y="1" width="2" height="1"/><rect x="4" y="1" width="2" height="1"/><rect x="4" y="2" width="2" height="1"/><rect x="3" y="3" width="2" height="1"/><rect x="2" y="4" width="2" height="1"/><rect x="2" y="5" width="2" height="1"/><rect x="2" y="7" width="2" height="1"/></svg>
<div class="a" style="left:754px;top:279px;width:14px;height:14px;background:#fff;border:2px solid #c8c8c8"></div>
<svg class="a" style="left:758px;top:282px" width="6" height="8" viewBox="0 0 6 8" shape-rendering="crispEdges" fill="#000"><rect x="1" y="0" width="4" height="1"/><rect x="0" y="1" width="2" height="1"/><rect x="4" y="1" width="2" height="1"/><rect x="4" y="2" width="2" height="1"/><rect x="3" y="3" width="2" height="1"/><rect x="2" y="4" width="2" height="1"/><rect x="2" y="5" width="2" height="1"/><rect x="2" y="7" width="2" height="1"/></svg>
<div class="a" style="left:754px;top:526px;width:14px;height:14px;background:#fff;border:2px solid #c8c8c8"></div>
<svg class="a" style="left:758px;top:529px" width="6" height="8" viewBox="0 0 6 8" shape-rendering="crispEdges" fill="#000"><rect x="1" y="0" width="4" height="1"/><rect x="0" y="1" width="2" height="1"/><rect x="4" y="1" width="2" height="1"/><rect x="4" y="2" width="2" height="1"/><rect x="3" y="3" width="2" height="1"/><rect x="2" y="4" width="2" height="1"/><rect x="2" y="5" width="2" height="1"/><rect x="2" y="7" width="2" height="1"/></svg>
<div class="a" style="left:754px;top:545px;width:14px;height:14px;background:#fff;border:2px solid #c8c8c8"></div>
<svg class="a" style="left:758px;top:548px" width="6" height="8" viewBox="0 0 6 8" shape-rendering="crispEdges" fill="#000"><rect x="1" y="0" width="4" height="1"/><rect x="0" y="1" width="2" height="1"/><rect x="4" y="1" width="2" height="1"/><rect x="4" y="2" width="2" height="1"/><rect x="3" y="3" width="2" height="1"/><rect x="2" y="4" width="2" height="1"/><rect x="2" y="5" width="2" height="1"/><rect x="2" y="7" width="2" height="1"/></svg>
<div class="a" style="left:754px;top:754px;width:14px;height:14px;background:#fff;border:2px solid #c8c8c8"></div>
<svg class="a" style="left:758px;top:757px" width="6" height="8" viewBox="0 0 6 8" shape-rendering="crispEdges" fill="#000"><rect x="1" y="0" width="4" height="1"/><rect x="0" y="1" width="2" height="1"/><rect x="4" y="1" width="2" height="1"/><rect x="4" y="2" width="2" height="1"/><rect x="3" y="3" width="2" height="1"/><rect x="2" y="4" width="2" height="1"/><rect x="2" y="5" width="2" height="1"/><rect x="2" y="7" width="2" height="1"/></svg>
<div class="a" style="left:867px;top:184px;width:14px;height:14px;background:#fff;border:2px solid #c8c8c8"></div>
<svg class="a" style="left:871px;top:187px" width="6" height="8" viewBox="0 0 6 8" shape-rendering="crispEdges" fill="#000"><rect x="1" y="0" width="4" height="1"/><rect x="0" y="1" width="2" height="1"/><rect x="4" y="1" width="2" height="1"/><rect x="4" y="2" width="2" height="1"/><rect x="3" y="3" width="2" height="1"/><rect x="2" y="4" width="2" height="1"/><rect x="2" y="5" width="2" height="1"/><rect x="2" y="7" width="2" height="1"/></svg>
<div class="a" style="left:867px;top:564px;width:14px;height:14px;background:#fff;border:2px solid #c8c8c8"></div>
<svg class="a" style="left:871px;top:567px" width="6" height="8" viewBox="0 0 6 8" shape-rendering="crispEdges" fill="#000"><rect x="1" y="0" width="4" height="1"/><rect x="0" y="1" width="2" height="1"/><rect x="4" y="1" width="2" height="1"/><rect x="4" y="2" width="2" height="1"/><rect x="3" y="3" width="2" height="1"/><rect x="2" y="4" width="2" height="1"/><rect x="2" y="5" width="2" height="1"/><rect x="2" y="7" width="2" height="1"/></svg>
<div class="a" style="left:867px;top:583px;width:14px;height:14px;background:#fff;border:2px solid #c8c8c8"></div>
<svg class="a" style="left:871px;top:586px" width="6" height="8" viewBox="0 0 6 8" shape-rendering="crispEdges" fill="#000"><rect x="1" y="0" width="4" height="1"/><rect x="0" y="1" width="2" height="1"/><rect x="4" y="1" width="2" height="1"/><rect x="4" y="2" width="2" height="1"/><rect x="3" y="3" width="2" height="1"/><rect x="2" y="4" width="2" height="1"/><rect x="2" y="5" width="2" height="1"/><rect x="2" y="7" width="2" height="1"/></svg>
<div class="a" style="left:867px;top:602px;width:14px;height:14px;background:#fff;border:2px solid #c8c8c8"></div>
<svg class="a" style="left:871px;top:605px" width="6" height="8" viewBox="0 0 6 8" shape-rendering="crispEdges" fill="#000"><rect x="1" y="0" width="4" height="1"/><rect x="0" y="1" width="2" height="1"/><rect x="4" y="1" width="2" height="1"/><rect x="4" y="2" width="2" height="1"/><rect x="3" y="3" width="2" height="1"/><rect x="2" y="4" width="2" height="1"/><rect x="2" y="5" width="2" height="1"/><rect x="2" y="7" width="2" height="1"/></svg>
<div class="a" style="left:754px;top:678px;width:14px;height:14px;background:#fff;border:2px solid #c8c8c8"></div>
<svg class="a" style="left:758px;top:681px" width="6" height="8" viewBox="0 0 6 8" shape-rendering="crispEdges" fill="#000"><rect x="1" y="0" width="4" height="1"/><rect x="0" y="1" width="2" height="1"/><rect x="4" y="1" width="2" height="1"/><rect x="4" y="2" width="2" height="1"/><rect x="3" y="3" width="2" height="1"/><rect x="2" y="4" width="2" height="1"/><rect x="2" y="5" width="2" height="1"/><rect x="2" y="7" width="2" height="1"/></svg>
<div class="g" style="left:660.6px;top:110px;transform:scaleX(0.9);">U1</div>
<div class="g" style="left:773.91px;top:110px;transform:scaleX(0.8867);">Site de production 1</div>
<div class="g" style="left:660.5px;top:129px;transform:scaleX(0.9);">12</div>
<div class="g" style="left:773.88px;top:129px;transform:scaleX(0.9174);">Niveau de Stock</div>
<div class="g" style="left:661px;top:148px;transform:scaleX(0.9);">0</div>
<div class="g" style="left:773.9px;top:148px;transform:scaleX(0.8872);">A partir des DAs</div>
<div class="g" style="left:660.5px;top:167px;transform:scaleX(0.9);">10</div>
<div class="g" style="left:773.94px;top:167px;transform:scaleX(0.8573);">Par Commande Fournisseur</div>
<div class="g" style="left:660.65px;top:186px;transform:scaleX(0.8512);">FERCO</div>
<div class="g" style="left:887.16px;top:186px;transform:scaleX(0.8439);">FERCO</div>
<div class="a" style="left:658px;top:205px;width:10px;height:10px;background:#fff;border:1px solid #c8c8c8"></div>
<div class="g" style="left:660.5px;top:224px;transform:scaleX(0.9);">Un</div>
<div class="g" style="left:773.89px;top:224px;transform:scaleX(0.9074);">Unité</div>
<div class="mm" style="left:711.15px;top:299px"><span style="display:inline-block;width:6.95px;text-align:center">0</span><span style="display:inline-block;width:6.95px;text-align:center;font-family:Liberation Mono,monospace;font-size:11.5px">,</span><span style="display:inline-block;width:6.95px;text-align:center">0</span><span style="display:inline-block;width:6.95px;text-align:center">0</span><span style="display:inline-block;width:6.95px;text-align:center">0</span></div>
<div class="g" style="left:767.3px;top:300px;transform:scaleX(0.9);">Un</div>
<div class="mm" style="left:711.15px;top:318px"><span style="display:inline-block;width:6.95px;text-align:center">0</span><span style="display:inline-block;width:6.95px;text-align:center;font-family:Liberation Mono,monospace;font-size:11.5px">,</span><span style="display:inline-block;width:6.95px;text-align:center">0</span><span style="display:inline-block;width:6.95px;text-align:center">0</span><span style="display:inline-block;width:6.95px;text-align:center">0</span></div>
<div class="g" style="left:767.3px;top:319px;transform:scaleX(0.9);">Un</div>
<div class="mm" style="left:676.10px;top:337px"><span style="display:inline-block;width:6.95px;text-align:center">0</span><span style="display:inline-block;width:6.95px;text-align:center;font-family:Liberation Mono,monospace;font-size:11.5px">,</span><span style="display:inline-block;width:6.95px;text-align:center">0</span><span style="display:inline-block;width:6.95px;text-align:center">0</span></div>
<div class="g" style="left:723px;top:338px;transform:scaleX(0.9);">%</div>
<div class="mm" style="left:667.10px;top:356px"><span style="display:inline-block;width:6.95px;text-align:center">2</span></div>
<div class="g" style="left:692.5px;top:357px;transform:scaleX(0.8568);">Jour(s)</div>
<div class="mm" style="left:667.10px;top:375px"><span style="display:inline-block;width:6.95px;text-align:center">0</span></div>
<div class="g" style="left:692.5px;top:376px;transform:scaleX(0.8568);">Jour(s)</div>
<div class="mm" style="left:667.10px;top:394px"><span style="display:inline-block;width:6.95px;text-align:center">0</span></div>
<div class="g" style="left:692.5px;top:395px;transform:scaleX(0.8568);">Jour(s)</div>
<div class="mm" style="left:674.10px;top:413px"><span style="display:inline-block;width:6.95px;text-align:center">2</span></div>
<div class="g" style="left:701.1px;top:414px;transform:scaleX(0.8568);">Jour(s)</div>
<div class="mm" style="left:683.30px;top:432px"><span style="display:inline-block;width:6.95px;text-align:center">1</span><span style="display:inline-block;width:6.95px;text-align:center">0</span><span style="display:inline-block;width:6.95px;text-align:center">0</span><span style="display:inline-block;width:6.95px;text-align:center">0</span><span style="display:inline-block;width:6.95px;text-align:center;font-family:Liberation Mono,monospace;font-size:11.5px">,</span><span style="display:inline-block;width:6.95px;text-align:center">0</span><span style="display:inline-block;width:6.95px;text-align:center">0</span><span style="display:inline-block;width:6.95px;text-align:center">0</span></div>
<div class="g" style="left:760px;top:433px;transform:scaleX(0.9);">Un</div>
<div class="mm" style="left:690.25px;top:451px"><span style="display:inline-block;width:6.95px;text-align:center">1</span><span style="display:inline-block;width:6.95px;text-align:center">5</span><span style="display:inline-block;width:6.95px;text-align:center">0</span><span style="display:inline-block;width:6.95px;text-align:center;font-family:Liberation Mono,monospace;font-size:11.5px">,</span><span style="display:inline-block;width:6.95px;text-align:center">0</span><span style="display:inline-block;width:6.95px;text-align:center">0</span><span style="display:inline-block;width:6.95px;text-align:center">0</span></div>
<div class="g" style="left:760px;top:452px;transform:scaleX(0.9);">Un</div>
<div class="mm" style="left:674.10px;top:470px"><span style="display:inline-block;width:6.95px;text-align:center">0</span></div>
<div class="g" style="left:700.5px;top:471px;transform:scaleX(0.873);">Jour(s)</div>
<div class="mm" style="left:704.15px;top:489px"><span style="display:inline-block;width:6.95px;text-align:center">0</span><span style="display:inline-block;width:6.95px;text-align:center;font-family:Liberation Mono,monospace;font-size:11.5px">,</span><span style="display:inline-block;width:6.95px;text-align:center">0</span><span style="display:inline-block;width:6.95px;text-align:center">0</span><span style="display:inline-block;width:6.95px;text-align:center">0</span></div>
<div class="g" style="left:760px;top:490px;transform:scaleX(0.9);">Un</div>
<div class="mm" style="left:704.15px;top:508px"><span style="display:inline-block;width:6.95px;text-align:center">0</span><span style="display:inline-block;width:6.95px;text-align:center;font-family:Liberation Mono,monospace;font-size:11.5px">,</span><span style="display:inline-block;width:6.95px;text-align:center">0</span><span style="display:inline-block;width:6.95px;text-align:center">0</span><span style="display:inline-block;width:6.95px;text-align:center">0</span></div>
<div class="g" style="left:760px;top:509px;transform:scaleX(0.9);">Un</div>
<div class="g" style="left:660.5px;top:623px;transform:scaleX(0.9);">2</div>
<div class="g" style="left:692.87px;top:623px;transform:scaleX(0.9269);">Réception</div>
<div class="mm" style="left:697.15px;top:641px"><span style="display:inline-block;width:6.95px;text-align:center">8</span><span style="display:inline-block;width:6.95px;text-align:center;font-family:Liberation Mono,monospace;font-size:11.5px">,</span><span style="display:inline-block;width:6.95px;text-align:center">0</span><span style="display:inline-block;width:6.95px;text-align:center">0</span><span style="display:inline-block;width:6.95px;text-align:center">0</span></div>
<div class="g" style="left:660.5px;top:661px;transform:scaleX(0.9);">EUR</div>
<div class="g" style="left:753px;top:661px;transform:scaleX(0.9);">€</div>
<div class="mm" style="left:660.10px;top:679px"><span style="display:inline-block;width:6.95px;text-align:center">0</span><span style="display:inline-block;width:6.95px;text-align:center">1</span><span style="display:inline-block;width:6.95px;text-align:center;font-family:Liberation Mono,monospace;font-size:11.5px">/</span><span style="display:inline-block;width:6.95px;text-align:center">0</span><span style="display:inline-block;width:6.95px;text-align:center">9</span><span style="display:inline-block;width:6.95px;text-align:center;font-family:Liberation Mono,monospace;font-size:11.5px">/</span><span style="display:inline-block;width:6.95px;text-align:center">2</span><span style="display:inline-block;width:6.95px;text-align:center">0</span><span style="display:inline-block;width:6.95px;text-align:center">2</span><span style="display:inline-block;width:6.95px;text-align:center">3</span></div>
<div class="mm" style="left:697.15px;top:698px"><span style="display:inline-block;width:6.95px;text-align:center">1</span><span style="display:inline-block;width:6.95px;text-align:center;font-family:Liberation Mono,monospace;font-size:11.5px">,</span><span style="display:inline-block;width:6.95px;text-align:center">0</span><span style="display:inline-block;width:6.95px;text-align:center">0</span><span style="display:inline-block;width:6.95px;text-align:center">0</span></div>
<div class="g" style="left:660.5px;top:718px;transform:scaleX(0.9);">Un</div>
<div class="g" style="left:752.28px;top:718px;transform:scaleX(0.9185);">Unité</div>
<div class="mm" style="left:697.15px;top:736px"><span style="display:inline-block;width:6.95px;text-align:center">0</span><span style="display:inline-block;width:6.95px;text-align:center;font-family:Liberation Mono,monospace;font-size:11.5px">,</span><span style="display:inline-block;width:6.95px;text-align:center">0</span><span style="display:inline-block;width:6.95px;text-align:center">0</span><span style="display:inline-block;width:6.95px;text-align:center">0</span></div>
<div class="a" style="left:738px;top:689px;width:155px;height:20px;background:#fff;border:1px solid #767676;box-shadow:3px 3px 2px rgba(0,0,0,0.42)"></div>
<div class="t" style="left:744px;top:693px;font-size:11.5px;letter-spacing:-0.1px;color:#575757">(AppDPADev) Devise DPAC</div>
<svg class="a" style="left:730px;top:660px" width="30" height="29" viewBox="730 660 30 29"><path d="M738.5,671.5 L738.5,688.5 L742.5,684.5 L745.5,691 L748,690 L745.5,683.5 L750,683.5 Z" fill="#fff" stroke="#000" stroke-width="1" stroke-linejoin="miter"/></svg></body></html>
